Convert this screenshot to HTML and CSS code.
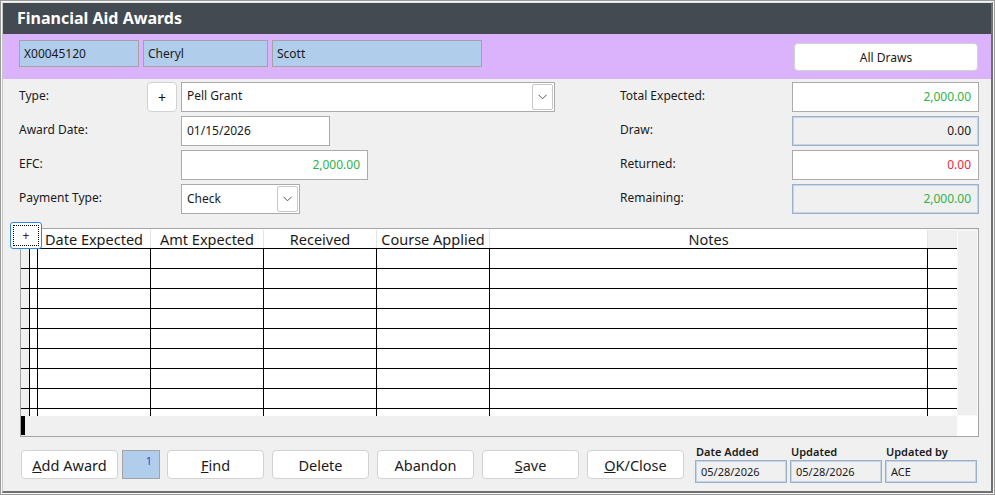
FILE: index.html
```html
<!DOCTYPE html>
<html lang="en">
<head>
  <meta charset="UTF-8" />
  <title>Financial Aid Awards</title>
  <link rel="stylesheet" href="styles.css">
</head>
<body>
  <div class="window">
    <div class="frame">
      <div class="titlebar">Financial Aid Awards</div>

      <div class="student-bar">
        <div class="student-field id">X00045120</div>
        <div class="student-field first">Cheryl</div>
        <div class="student-field last">Scott</div>
        <button class="btn draws">All Draws</button>
      </div>

      <div class="form">
        <div class="form-left">
          <div class="form-row">
            <label class="lbl lbl-short">Type:</label>
            <button class="btn add-type">+</button>
            <div class="combo combo-type">
              <span class="combo-text">Pell Grant</span>
              <span class="combo-arrow"><svg width="9" height="6" viewBox="0 0 9 6"><path d="M0.5 0.8 L4.5 4.8 L8.5 0.8" fill="none" stroke="#555" stroke-width="1"/></svg></span>
            </div>
          </div>
          <div class="form-row">
            <label class="lbl">Award Date:</label>
            <div class="input input-date">01/15/2026</div>
          </div>
          <div class="form-row">
            <label class="lbl">EFC:</label>
            <div class="input input-efc num green">2,000.00</div>
          </div>
          <div class="form-row">
            <label class="lbl">Payment Type:</label>
            <div class="combo combo-pay">
              <span class="combo-text">Check</span>
              <span class="combo-arrow"><svg width="9" height="6" viewBox="0 0 9 6"><path d="M0.5 0.8 L4.5 4.8 L8.5 0.8" fill="none" stroke="#555" stroke-width="1"/></svg></span>
            </div>
          </div>
        </div>

        <div class="form-right">
          <div class="form-row">
            <label class="lbl-r">Total Expected:</label>
            <div class="input input-amt num green">2,000.00</div>
          </div>
          <div class="form-row">
            <label class="lbl-r">Draw:</label>
            <div class="input input-amt num readonly">0.00</div>
          </div>
          <div class="form-row">
            <label class="lbl-r">Returned:</label>
            <div class="input input-amt num red">0.00</div>
          </div>
          <div class="form-row">
            <label class="lbl-r">Remaining:</label>
            <div class="input input-amt num green readonly">2,000.00</div>
          </div>
        </div>
      </div>

      <div class="grid-box">
        <button class="grid-add"><span class="focus-rect">+</span></button>
        <div class="grid-main">
          <div class="grid-view">
            <div class="grid-row grid-head">
              <div class="cell c-sel"></div>
              <div class="cell c-mark"></div>
              <div class="cell c-col">Date Expected</div>
              <div class="cell c-col">Amt Expected</div>
              <div class="cell c-col">Received</div>
              <div class="cell c-col">Course Applied</div>
              <div class="cell c-notes">Notes</div>
              <div class="cell c-fill"></div>
            </div>
            <div id="gridBody"></div>
          </div>
          <div class="hscroll"><span class="cursor"></span></div>
        </div>
        <div class="vscroll-col">
          <div class="vscroll"></div>
          <div class="corner"></div>
        </div>
      </div>

      <div class="footer">
        <div class="buttons">
          <button class="btn fbtn"><u>A</u>dd Award</button>
          <div class="counter">1</div>
          <button class="btn fbtn find"><u>F</u>ind</button>
          <button class="btn fbtn">Delete</button>
          <button class="btn fbtn">Abandon</button>
          <button class="btn fbtn"><u>S</u>ave</button>
          <button class="btn fbtn"><u>O</u>K/Close</button>
        </div>
        <div class="audit">
          <div class="audit-item">
            <div class="audit-lbl">Date Added</div>
            <div class="audit-val">05/28/2026</div>
          </div>
          <div class="audit-item">
            <div class="audit-lbl">Updated</div>
            <div class="audit-val">05/28/2026</div>
          </div>
          <div class="audit-item">
            <div class="audit-lbl">Updated by</div>
            <div class="audit-val">ACE</div>
          </div>
        </div>
      </div>
    </div>
  </div>
  <script>
    // empty payment rows
    const body = document.getElementById('gridBody');
    for (let i = 0; i < 9; i++) {
      const row = document.createElement('div');
      row.className = 'grid-row';
      row.innerHTML = `
        <div class="cell c-sel"></div>
        <div class="cell c-mark"></div>
        <div class="cell c-col"></div>
        <div class="cell c-col"></div>
        <div class="cell c-col"></div>
        <div class="cell c-col"></div>
        <div class="cell c-notes"></div>
        <div class="cell c-fill"></div>
      `;
      body.appendChild(row);
    }
  </script>
</body>
</html>
```

FILE: styles.css
```css
* {
  box-sizing: border-box;
}
body {
  margin: 0;
  font-family: 'Noto Sans', 'Open Sans', sans-serif;
  font-size: 12px;
  color: #1a1a1a;
  background: #fafafa;
}
.window {
  width: 995px;
  height: 495px;
  border: 1px solid #9a9a9a;
  padding: 1px;
  background: #f7f7f7;
}
.frame {
  height: 100%;
  background: #f0f0f0;
  border-top: 1px solid #e6e6e6;
  border-left: 1px solid #c8c8c8;
  border-right: 2px solid #707070;
  border-bottom: 2px solid #707070;
  display: flex;
  flex-direction: column;
}
.titlebar {
  height: 31px;
  background: #434a52;
  color: #fff;
  font-size: 16px;
  font-weight: bold;
  line-height: 31px;
  padding-left: 14px;
}
.student-bar {
  height: 45px;
  background: #dab3fc;
  display: flex;
  align-items: flex-start;
  padding: 6px 13px 0 16px;
}
.student-field {
  height: 27px;
  background: #b0cdeb;
  border: 1px solid #a3a3a3;
  padding: 0 4px;
  line-height: 25px;
  font-size: 12px;
  margin-right: 4px;
}
.student-field.id { width: 120px; }
.student-field.first { width: 125px; }
.student-field.last { width: 210px; }
.btn {
  font-family: inherit;
  background: #fff;
  border: 1px solid #d2d2d2;
  border-radius: 4px;
  color: #1a1a1a;
  padding: 0;
  cursor: pointer;
}
.btn.draws {
  margin-left: auto;
  margin-top: 3px;
  width: 184px;
  height: 28px;
  font-size: 12px;
}
.form {
  display: flex;
  padding: 3px 12px 0 16px;
}
.form-left,
.form-right {
  display: flex;
  flex-direction: column;
  gap: 4px;
}
.form-right {
  margin-left: auto;
  width: 359px;
}
.form-row {
  display: flex;
  align-items: center;
  height: 30px;
}
.lbl {
  width: 162px;
  margin-top: -3px;
}
.lbl-short {
  width: 128px;
}
.lbl-r {
  width: 172px;
  margin-top: -3px;
}
.btn.add-type {
  width: 30px;
  height: 30px;
  font-size: 14px;
  margin-right: 4px;
  color: #111;
}
.input,
.combo {
  height: 30px;
  background: #fff;
  border: 1px solid #ababab;
  padding: 0 5px;
  line-height: 28px;
  font-size: 12px;
}
.combo {
  display: flex;
  align-items: center;
  padding-right: 1px;
}
.combo-text {
  flex: 1;
}
.combo-type { width: 374px; }
.combo-type .combo-text { margin-top: -3px; }
.combo-pay { width: 119px; }
.combo-arrow {
  width: 21px;
  height: 26px;
  border: 1px solid #c8c8c8;
  border-radius: 2px;
  display: flex;
  align-items: center;
  justify-content: center;
}
.input-date { width: 149px; }
.input-efc { width: 187px; }
.input-amt { width: 187px; }
.num {
  text-align: right;
  padding-right: 7px;
}
.green { color: #2eb24a; }
.red { color: #f0283c; }
.readonly {
  background: #f0f0f0;
  border-color: #9cb0c8;
  box-shadow: inset 0 0 0 1px #c4d5ea;
}
.grid-box {
  position: relative;
  margin: 14px 12px 0 17px;
  height: 209px;
  border: 1px solid #a5a5a5;
  display: flex;
  background: #f0f0f0;
}
.grid-main {
  width: 936px;
  display: flex;
  flex-direction: column;
}
.grid-view {
  height: 187px;
  overflow: hidden;
  background: #fff;
}
.grid-row {
  display: flex;
  height: 20px;
  border-top: 1px solid #000;
}
.grid-row.grid-head {
  height: 19px;
  border-top: none;
  font-size: 14.5px;
  line-height: 19px;
  padding-top: 1px;
}
.cell {
  height: 100%;
  border-right: 1px solid #000;
  flex: none;
}
.grid-head .cell {
  border-right-color: #e4e4e4;
  text-align: center;
  white-space: nowrap;
  overflow: hidden;
}
.c-sel { width: 9px; background: #f0f0f0; }
.grid-head .c-sel { background: #fff; }
.c-mark { width: 8px; }
.c-col { width: 113px; }
.c-notes { width: 438px; }
.c-fill { width: 29px; border-right: none; }
.grid-head .c-fill { background: #f0f0f0; border-right: none; }
.hscroll {
  flex: 1;
  background: #f0f0f0;
  position: relative;
}
.cursor {
  position: absolute;
  left: 0;
  top: 0;
  width: 4px;
  height: 19px;
  background: #000;
}
.vscroll-col {
  flex: 1;
  display: flex;
  flex-direction: column;
}
.vscroll {
  flex: 1;
  margin-top: 1px;
  background: #efefef;
  border: 1px solid #fafafa;
}
.corner {
  height: 20px;
  background: #fff;
}
.grid-add {
  position: absolute;
  left: -11px;
  top: -7px;
  width: 32px;
  height: 27px;
  background: #fff;
  border: 1px solid #2f86de;
  border-radius: 3px;
  padding: 2px;
  font-family: inherit;
  font-size: 12px;
}
.focus-rect {
  display: block;
  height: 100%;
  border: 1px dotted #000;
  line-height: 19px;
  color: #5a0a1e;
  text-align: center;
}
.footer {
  display: flex;
  padding: 7px 12px 0 18px;
}
.buttons {
  display: flex;
  align-items: flex-start;
  margin-top: 6px;
}
.fbtn {
  width: 97px;
  height: 29px;
  font-size: 14.5px;
  margin-right: 8px;
}
.fbtn:first-child { margin-right: 4px; }
.counter {
  width: 38px;
  height: 29px;
  background: #b0cdeb;
  border: 1px solid #a3a3a3;
  color: #3d3ddc;
  font-size: 11px;
  text-align: right;
  padding: 2px 7px 0 0;
  margin-right: 7px;
}
.audit {
  display: flex;
  gap: 3px;
  margin-left: 3px;
}
.audit-item {
  width: 92px;
}
.audit-lbl {
  font-size: 11px;
  font-weight: 600;
  padding-left: 1px;
  height: 16px;
  line-height: 16px;
}
.audit-val {
  height: 23px;
  background: #f0f0f0;
  border: 1px solid #9cb0c8;
  box-shadow: inset 0 0 0 1px #c4d5ea;
  font-size: 11px;
  line-height: 21px;
  padding-left: 5px;
}
```
